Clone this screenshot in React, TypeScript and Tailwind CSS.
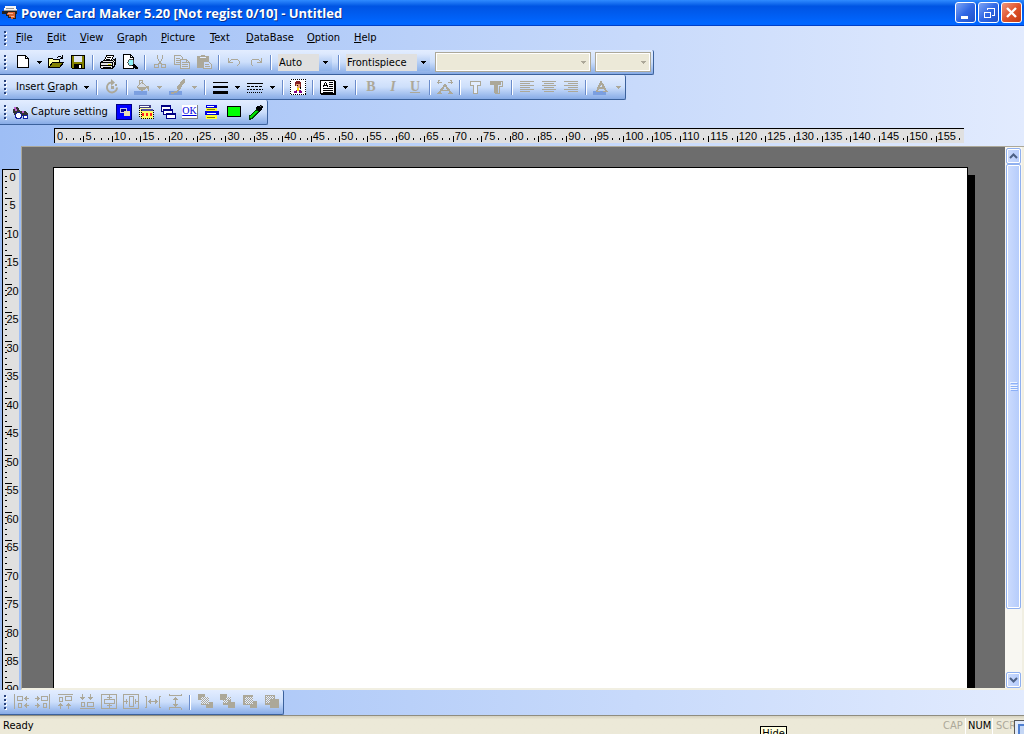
import type { ReactNode } from "react";
import clsx from "clsx";

const menus = [
  { label: "_File", width: "w-[31px]" },
  { label: "_Edit", width: "w-[33px]" },
  { label: "_View", width: "w-[37px]" },
  { label: "_Graph", width: "w-[44px]" },
  { label: "_Picture", width: "w-[49px]" },
  { label: "_Text", width: "w-[36px]" },
  { label: "_DataBase", width: "w-[61px]" },
  { label: "_Option", width: "w-[47px]" },
  { label: "_Help", width: "w-[36px]" },
];

const marks = (count: number) => Array.from({ length: count }, (_, i) => i * 5);

// "_File" -> F underlined
function Mnemonic({ text }: { text: string }) {
  const at = text.indexOf("_");
  if (at < 0) return <>{text}</>;
  return (
    <span className="whitespace-pre">
      {text.slice(0, at)}
      <u className="underline-offset-1">{text[at + 1]}</u>
      {text.slice(at + 2)}
    </span>
  );
}

function Icon({ children, size = 16 }: { children: ReactNode; size?: number }) {
  return (
    <svg width={size} height={size} viewBox={`0 0 ${size} ${size}`} fill="none" stroke="currentColor" shapeRendering="crispEdges">
      {children}
    </svg>
  );
}

function Grip() {
  return (
    <div className="w-[12px] shrink-0 flex flex-col gap-[2px] pl-[4px]">
      {[0, 1, 2, 3].map((i) => (
        <i key={i} className="w-[2px] h-[2px] bg-[#27417b] shadow-[1px_1px_0_#fff]" />
      ))}
    </div>
  );
}

function Sep() {
  return (
    <div className="w-[8px] shrink-0 flex justify-center">
      <div className="w-[2px] h-[15px] bg-[#6a8ccb] border-r border-white" />
    </div>
  );
}

function Tool({ name, off, children }: { name: string; off?: boolean; children: ReactNode }) {
  return (
    <button
      aria-label={name}
      disabled={off}
      className={clsx("w-[22px] h-[22px] shrink-0 flex items-center justify-center", off ? "text-[#aca899]" : "text-black")}
    >
      {children}
    </button>
  );
}

function Triangle() {
  return (
    <svg width="5" height="3" viewBox="0 0 5 3" fill="currentColor" shapeRendering="crispEdges">
      <path d="M0 0h5v1H4v1H3v1H2V2H1V1H0z" />
    </svg>
  );
}

function Arrow({ name, off, width = "w-[13px]" }: { name: string; off?: boolean; width?: string }) {
  return (
    <button
      aria-label={name}
      disabled={off}
      className={clsx("h-[22px] shrink-0 flex items-center justify-center", width, off ? "text-[#aca899]" : "text-black")}
    >
      <Triangle />
    </button>
  );
}

function Bar({ children }: { children: ReactNode }) {
  return (
    <div className="h-[25px] w-fit flex items-center rounded-r-[2px] bg-linear-to-b from-[#e3edff] via-[#cddffb] to-[#87abe6] border-b border-r border-[#3b619c]">
      <Grip />
      {children}
    </div>
  );
}

function Combo({ label, value, width }: { label: string; value: string; width: string }) {
  return (
    <div className={clsx("h-[17px] mx-[3px] shrink-0 flex bg-[#e0e0e0] relative", width)}>
      <select aria-label={label} defaultValue={value} className="w-full appearance-none bg-transparent pl-[1px] pr-[13px] leading-[17px] outline-none">
        <option>{value}</option>
      </select>
      <span className="absolute right-0 inset-y-0 w-[13px] flex items-center justify-center bg-linear-to-b from-[#dce8fd] to-[#8db2ea] pointer-events-none">
        <Triangle />
      </span>
    </div>
  );
}

function EmptyCombo({ label, width }: { label: string; width: string }) {
  return (
    <div className={clsx("h-[20px] shrink-0 relative border border-[#aca899] bg-white p-[1px]", width)}>
      <select aria-label={label} disabled className="block w-full h-full appearance-none bg-[#ece9d8]" />
      <span className="absolute right-[4px] inset-y-0 flex items-center text-[#aca899] pointer-events-none">
        <Triangle />
      </span>
    </div>
  );
}

function TitleBar() {
  const base = "w-[21px] h-[21px] rounded-[3px] border border-white flex items-center justify-center text-white";
  return (
    <header className="h-[26px] flex items-center pl-[2px] pr-[2px] bg-linear-to-b from-[#2f8bff] from-0% via-[#0054e3] via-25% to-[#0066ff] to-90% border-b border-[#0040c8]">
      <svg width="16" height="16" viewBox="0 0 16 16" shapeRendering="crispEdges">
        <path d="M3 1h11l1 5H2z" fill="#f4f4f4" />
        <path d="M4 3h8v1H4zM2 5h13v1H2z" fill="#9a9a9a" />
        <path d="M0 6h15v3h-1v5h-4v-1H6v-2H4V9H0z" fill="#222" />
        <path d="M6 7h7v6h-2v1H9v-2H7v-2H5V8h1z" fill="#d9622f" />
        <path d="M6 8h5v1H6zM9 11h3v1H9z" fill="#f8b48a" />
      </svg>
      <h1 className="flex-1 pl-[3px] font-['Open_Sans','Liberation_Sans',sans-serif] text-[13px] font-bold text-white whitespace-nowrap [text-shadow:1px_1px_0_#0a318e]">
        Power Card Maker 5.20 [Not regist 0/10] - Untitled
      </h1>
      <div className="flex gap-[2px]">
        <button aria-label="Minimize" className={clsx(base, "bg-linear-to-br from-[#7ea4f4] via-[#3168e5] to-[#2050c8]")}>
          <Icon><path d="M3 11h7v3H3z" fill="currentColor" stroke="none" /></Icon>
        </button>
        <button aria-label="Restore" className={clsx(base, "bg-linear-to-br from-[#7ea4f4] via-[#3168e5] to-[#2050c8]")}>
          <Icon><path d="M6 5V3.5h7.5V10H11M6 3h8M3.5 7.5h6v5h-6zM3 7h7" /></Icon>
        </button>
        <button aria-label="Close" className={clsx(base, "bg-linear-to-br from-[#f0957a] via-[#e0542c] to-[#c33b13]")}>
          <svg width="15" height="15" viewBox="0 0 15 15" stroke="currentColor" strokeWidth="2.4"><path d="M3 3l9 9M12 3l-9 9" /></svg>
        </button>
      </div>
    </header>
  );
}

function StandardBar() {
  return (
    <Bar>
      <Tool name="New">
        <Icon><path d="M2.500 1.500h8l3 3v9h-11z" fill="#fff" /><path d="M10.500 1.500v3h3" /></Icon>
      </Tool>
      <Arrow name="New options" width="w-[11px]" />
      <Tool name="Open">
        <Icon>
          <path d="M.5 13.500V4.500h4l1 1h6v3H4.500L1 13.500" fill="#ffff9c" />
          <path d="M1 13.500L4.500 8.500H15.500L11.500 13.500z" fill="#848200" />
          <path d="M9 3.500h1M10 2.500h3M13 3.500h2M14.500 1v4M12 4.500h3" />
        </Icon>
      </Tool>
      <Tool name="Save">
        <Icon>
          <path d="M1.500 1.500h13v13h-12l-1-1z" fill="#848200" />
          <path d="M4 2h8v6H4z" fill="#dfe6f5" stroke="none" />
          <path d="M4 10h8v4H4z" fill="#000" stroke="none" />
          <path d="M9 11h2v3H9z" fill="#fff" stroke="none" />
        </Icon>
      </Tool>
      <Sep />
      <Tool name="Print">
        <Icon>
          <path d="M4.500 6.500l2-5h7l-2 5z" fill="#fff" />
          <path d="M7 3.500h4M6 5.500h4" />
          <path d="M.5 8.500l3-2h9l3-2v6l-3 4h-11l-1-1z" fill="#e4e4e4" />
          <path d="M1 8.500h11.500v5M1 11.500h11M3 13.500h8M12.500 8.500l3-3M14 8v4" />
          <path d="M8 10h3v1H8z" fill="#d8d800" stroke="none" />
        </Icon>
      </Tool>
      <Tool name="Print preview">
        <Icon>
          <path d="M1.500.5h7l3 3v11h-10z" fill="#fff" />
          <path d="M8.500.5v3h3" />
          <circle cx="9" cy="8.500" r="3" fill="#8ff3f8" stroke="#555" />
          <path d="M11 11l4 4M12 11l4 4" strokeWidth="1.500" />
        </Icon>
      </Tool>
      <Sep />
      <Tool name="Cut" off>
        <Icon><path d="M5.500 1v3l2 4 3 3M10.500 1v3l-2 4-3 3" /><circle cx="4.500" cy="12" r="2" /><circle cx="11.500" cy="12" r="2" /></Icon>
      </Tool>
      <Tool name="Copy" off>
        <Icon>
          <path d="M.5 1.500h6l2 2v7h-8zM2 4.500h4M2 6.500h4M2 8.500h4" />
          <path d="M6.500 5.500h6l3 3v6h-9z" fill="#c8dafa" />
          <path d="M8 8.500h4M8 10.500h6M8 12.500h6M12.500 5.500v3h3" />
        </Icon>
      </Tool>
      <Tool name="Paste" off>
        <Icon>
          <path d="M1 2h12v12H1zM5 1h4v1H5z" fill="currentColor" stroke="none" />
          <path d="M4 3.500h6" stroke="#e3edff" />
          <path d="M7.500 7.500h5l3 3v4h-8z" fill="#c8dafa" />
          <path d="M9 10.500h4M9 12.500h5" />
        </Icon>
      </Tool>
      <Sep />
      <Tool name="Undo" off><Icon><path d="M2.500 4v5M2 8.500h5M3 8l3-3h5l2 2v3l-2 2" /></Icon></Tool>
      <Tool name="Redo" off><Icon><path d="M13.500 4v5M14 8.500H9M13 8l-3-3H5L3 7v3l2 2" /></Icon></Tool>
      <Sep />
      <Combo label="Zoom" value="Auto" width="w-[54px]" />
      <Sep />
      <Combo label="Page" value="Frontispiece" width="w-[84px]" />
      <div className="flex gap-[4px] pl-[2px] pr-[2px]">
        <EmptyCombo label="Font" width="w-[156px]" />
        <EmptyCombo label="Font size" width="w-[56px]" />
      </div>
    </Bar>
  );
}

function AlignIcon({ d }: { d: string }) {
  return <Icon><path d={d} /></Icon>;
}

function FormatBar() {
  return (
    <Bar>
      <button className="w-[68px] h-[22px] pl-[4px] text-left whitespace-nowrap"><Mnemonic text="Insert _Graph" /></button>
      <Arrow name="Insert graph options" />
      <Sep />
      <Tool name="Rotate" off>
        <svg width="16" height="16" viewBox="0 0 16 16" fill="none" stroke="currentColor">
          <path d="M7 3.500a5 5 0 1 0 6 5" strokeWidth="2" />
          <path d="M7 0l4 3.500L7 7z" fill="currentColor" stroke="none" />
          <path d="M7 7h3v3H7zM11 5h2v2h-2z" fill="currentColor" stroke="none" />
        </svg>
      </Tool>
      <Sep />
      <Tool name="Fill" off>
        <Icon><path d="M0 12h13v4H0z" fill="#7b9fe0" stroke="none" /><path d="M3 8l5-5 5 5-5 4z" fill="#d5ddea" /><path d="M4 8h8l-4 4z" fill="currentColor" /><path d="M5.500 6V1.500h3V5M14 7v5M13 7v3" /></Icon>
      </Tool>
      <Arrow name="Fill colour" off />
      <Tool name="Brush" off>
        <Icon><path d="M0 12h13v4H0z" fill="#7b9fe0" stroke="none" /><path d="M14 0h2v3l-5 7H8V8z" fill="currentColor" stroke="none" /><path d="M8.500 8.500l3 2M2 13.500h3l3-1 2-2" strokeWidth="2" /></Icon>
      </Tool>
      <Arrow name="Brush colour" off />
      <Sep />
      <Tool name="Line width"><Icon><path d="M1 3h15v1H1zM1 7h15v2H1zM1 12h15v3H1z" fill="currentColor" stroke="none" /></Icon></Tool>
      <Arrow name="Line width options" />
      <Tool name="Line style">
        <Icon><path d="M0 4.500h16" /><path d="M0 7.500h16" strokeDasharray="3 1" /><path d="M0 10.500h16" strokeDasharray="2 1" /><path d="M0 13.500h16" strokeDasharray="1 1" /></Icon>
      </Tool>
      <Arrow name="Line style options" />
      <Sep />
      <Tool name="Picture">
        <Icon>
          <path d="M0 0h16v16H0z" fill="#fff" stroke="none" /><path d="M.5.5h15v15H.5z" strokeDasharray="1 1" />
          <path d="M6 2h4v1h1v5h-1V5H6v2H5V3h1z" fill="#842020" stroke="none" /><path d="M6 5h4v4H7V7H6z" fill="#e8a070" stroke="none" />
          <path d="M4 12h2v-1h1v3h2v-3h2v1h1v2H4z" fill="#800080" stroke="none" /><path d="M7 9h2v3H7z" fill="#ffe000" stroke="none" /><path d="M7 6.500h1M10.500 8v2" />
        </Icon>
      </Tool>
      <Sep />
      <Tool name="Text box">
        <Icon><path d="M.5 1.500h14v13H.5z" fill="#fff" strokeWidth="1" /><path d="M15.500 2v14M1 15.500h14" /><path d="M3 7.500l2.500-4L8 7.500M4 6.500h3M9 3.500h4M9 5.500h4M9 7.500h4M3 9.500h10M3 11.500h10M3 13h10" /></Icon>
      </Tool>
      <Arrow name="Text box options" />
      <Sep />
      <button disabled aria-label="Bold" className="w-[22px] text-[#aca899] font-['Liberation_Serif',serif] text-[14px] font-bold">B</button>
      <button disabled aria-label="Italic" className="w-[22px] text-[#aca899] font-['Liberation_Serif',serif] text-[14px] font-bold italic">I</button>
      <button disabled aria-label="Underline" className="w-[22px] text-[#aca899] font-['Liberation_Serif',serif] text-[14px] font-bold underline">U</button>
      <Sep />
      <Tool name="Text spacing" off>
        <Icon><path d="M0 3.500h5M2.500 1L.5 3.500l2 2M11 3.500h5M13.500 1l2 2.500-2 2M0 14.500h5M11 14.500h5M5 11.500h6" /><path d="M2 14l6-8 6 8" strokeWidth="2" /></Icon>
      </Tool>
      <Sep />
      <Tool name="Outline text" off><Icon><path d="M3.500 2.500h10v4h-3v8h-4v-8h-3z" fill="#e3edff" /></Icon></Tool>
      <Tool name="Shadow text" off>
        <Icon><path d="M1 2h11v4H9v8H5V6H1z" fill="currentColor" stroke="none" /><path d="M12 2.500h1.500v5h-3v7H6" /></Icon>
      </Tool>
      <Sep />
      <Tool name="Align left" off><AlignIcon d="M1 2.500h14M1 4.500h10M1 6.500h14M1 8.500h10M1 10.500h14M1 12.500h10" /></Tool>
      <Tool name="Centre" off><AlignIcon d="M1 2.500h14M3 4.500h10M1 6.500h14M3 8.500h10M1 10.500h14M3 12.500h10" /></Tool>
      <Tool name="Align right" off><AlignIcon d="M1 2.500h14M5 4.500h10M1 6.500h14M5 8.500h10M1 10.500h14M5 12.500h10" /></Tool>
      <Sep />
      <Tool name="Text colour" off>
        <Icon><path d="M0 12h13v4H0z" fill="#7b9fe0" stroke="none" /><path d="M4 12l4-9 5 9M6 8.500h4" strokeWidth="2" /><path d="M3 12.500h4M10 12.500h5" /></Icon>
      </Tool>
      <Arrow name="Text colour options" off />
    </Bar>
  );
}

function CaptureBar() {
  return (
    <Bar>
      <button className="w-[101px] h-[22px] flex items-center gap-[2px] whitespace-nowrap">
        <Icon size={17}>
          <path d="M2 3h4l3 5v5H4L1 8z" fill="#333" stroke="none" /><path d="M9 7h4l3 3v4h-4l-3-3z" fill="#333" stroke="none" />
          <path d="M2 4h2M3 6h2M10 8h2" stroke="#c060d0" strokeWidth="2" />
          <circle cx="6.500" cy="11.500" r="3" fill="#fff" stroke="#1020a0" /><circle cx="13.500" cy="13" r="2" fill="#fff" stroke="#1020a0" />
        </Icon>
        Capture setting
      </button>
      <Tool name="Capture screen">
        <Icon><path d="M0 0h16v16H0z" fill="#0000ff" stroke="#000084" strokeWidth="2" /><path d="M4.500 4.500h6v4h-6z" stroke="#c8c8e8" fill="#000084" /><path d="M8 7h6v5H8z" fill="#e8e0b0" stroke="none" /></Icon>
      </Tool>
      <Tool name="Capture window">
        <Icon>
          <path d="M1 1h12v12H1z" fill="#ffffa0" stroke="none" /><path d="M1 1h12v3H1z" fill="#404084" stroke="none" /><path d="M2 2.500h9" stroke="#fff" />
          <path d="M3 5h12v10H3z" fill="#ffff60" stroke="none" /><path d="M3 5h12v2H3z" fill="#5050a0" stroke="none" />
          <path d="M4 10.500h11" stroke="#ff2020" strokeWidth="3" strokeDasharray="2 2" /><path d="M3 14.500h12M1.500 4v9M15.500 6v9M3.500 6v9" strokeDasharray="1 1" />
        </Icon>
      </Tool>
      <Tool name="Capture cascade">
        <Icon>
          <path d="M1.500 1.500h9v6h-9z" fill="#fff" stroke="#000084" /><path d="M1 2.500h10" stroke="#000084" />
          <path d="M3.500 5.500h9v5h-9z" fill="#fff" stroke="#000084" /><path d="M3 6.500h10" stroke="#000084" />
          <path d="M6.500 9.500h9v5h-9z" fill="#fff" stroke="#000084" /><path d="M6 10.500h10" stroke="#000084" />
        </Icon>
      </Tool>
      <Tool name="Capture control">
        <span className="w-[16px] h-[14px] bg-white border-r border-b border-[#808080] font-['Liberation_Serif',serif] text-[10px] leading-[12px] text-[#0000e0] underline">
          OK
        </span>
      </Tool>
      <Tool name="Capture menu">
        <Icon>
          <path d="M2 1h11v3H2z" fill="#0000e0" stroke="none" /><path d="M3 2.500h7" stroke="#fff" /><path d="M2 4h11v11H2z" fill="#ffff30" stroke="none" />
          <path d="M1 7h14v4H1z" fill="#0000e0" stroke="none" /><path d="M3 5.500h8M3 13.500h8" stroke="#808000" /><path d="M3 9h9" stroke="#fff" />
        </Icon>
      </Tool>
      <Tool name="Capture area"><Icon><path d="M1.500 2.500h13v10h-13z" fill="#00ff00" /></Icon></Tool>
      <Tool name="Pick colour">
        <Icon><path d="M1 15.500v-3l8-7 2 2-7 7z" fill="#00e000" stroke="#004000" /><path d="M9 3l4 4M11 5l3-3" strokeWidth="3" /><path d="M12 3l2-2" stroke="#777" /></Icon>
      </Tool>
    </Bar>
  );
}

const arrangeIcons = [
  { name: "Align left edges", d: "M1.500 0v15M4.500 2.500h5v4h-5zM11 4.500h5M13.500 2v5M12.500 3v3M12.500 10v3M11 11.500h5M13.500 9v5M5.500 9.500h3v4h-3z" },
  { name: "Align right edges", d: "M14.500 0v15M6.500 2.500h6v4h-6zM0 4.500h5M2.500 2v5M3.500 3v3M3.500 10v3M0 11.500h5M2.500 9v5M8.500 9.500h3v4h-3z" },
  { name: "Align tops", d: "M1 .5h15M2.500 3.500h3v4h-3zM8.500 2.500h6v4h-6zM3.500 9v6M1 11.500h5M2 10.500h3M11.500 9v6M9 11.500h5M10 10.500h3" },
  { name: "Align bottoms", d: "M1 14.500h15M2.500 8.500h3v4h-3zM8.500 8.500h6v4h-6zM3.500 0v6M1 3.500h5M2 4.500h3M11.500 0v6M9 3.500h5M10 4.500h3" },
  { name: "Centre vertically", d: "M.5.500h15v14H.5zM3.500 5.500h10v4h-10zM8.500 1v4M6 3.500h5M8.500 10v4M6 11.500h5" },
  { name: "Centre horizontally", d: "M.5.500h15v14H.5zM6.500 2.500h4v10h-4zM1 7.500h4M3.500 5v5M12 7.500h4M12.500 5v5" },
  { name: "Space across", d: "M1.500 2v12M14.500 2v12M0 2.500h2M14 2.500h2M0 13.500h2M14 13.500h2M3 7.500h10M5.500 5v5M4.500 6v3M10.500 5v5M11.500 6v3" },
  { name: "Space down", d: "M2 0v2M14 0v2M2 1.500h12M2 14v1.500M14 14v1.500M2 13.500h12M8.500 3v10M6 5.500h5M7 4.500h3M6 10.500h5M7 11.500h3" },
];

function ArrangeBar() {
  const dither = (
    <path d="M5 3.500h7M4 4.500h8M5 5.500h7M4 6.500h8M5 7.500h7M4 8.500h8M5 9.500h7" stroke="#e3edff" strokeDasharray="1 1" />
  );
  return (
    <Bar>
      <div className="-ml-[2px] flex">
        {arrangeIcons.map((icon) => (
          <Tool key={icon.name} name={icon.name} off><Icon><path d={icon.d} /></Icon></Tool>
        ))}
      </div>
      <Sep />
      <Tool name="Bring forward" off>
        <Icon><path d="M1 0h7v6H1zM4 3h8v8H4zM9 8h7v6H9z" fill="currentColor" stroke="none" />{dither}</Icon>
      </Tool>
      <Tool name="Send backward" off>
        <Icon><path d="M1 0h7v6H1zM4 3h8v8H4zM9 8h7v6H9z" fill="currentColor" stroke="none" /><path d="M8 3.500h4M7 4.500h5M8 5.500h4M5 6.500h4M4 7.500h5M5 8.500h4" stroke="#e3edff" strokeDasharray="1 1" /></Icon>
      </Tool>
      <Tool name="Bring to front" off>
        <Icon><path d="M2 1h10v10H2zM9 7h7v7H9z" fill="currentColor" stroke="none" />{dither}</Icon>
      </Tool>
      <Tool name="Send to back" off>
        <Icon><path d="M2 1h10v10H2zM7 5h9v9H7z" fill="currentColor" stroke="none" /><path d="M3 2.500h8M4 3.500h8M3 4.500h8M4 5.500h3M3 6.500h3M4 7.500h3M3 8.500h3" stroke="#e3edff" strokeDasharray="1 1" /></Icon>
      </Tool>
      <div className="w-[1px]" />
    </Bar>
  );
}

function TopRuler() {
  return (
    <div className="h-[15px] ml-[54px] mr-[60px] flex bg-[#e0e0e0] border-t border-l border-black font-['Liberation_Sans',sans-serif] text-[11px] leading-[14px]">
      {marks(32).map((n) => (
        <div key={n} className="flex-1 basis-0 min-w-0 flex items-end">
          <i className={clsx("w-[1px] h-[6px] mb-[1px]", n > 0 && "bg-black")} />
          <span className="pl-[1px]">{n}</span>
          <span className="flex-1 flex justify-around mb-[3px]">
            {Array.from({ length: n > 95 ? 1 : n > 5 ? 2 : 3 }, (_, i) => (
              <i key={i} className="w-[1px] h-[2px] bg-black" />
            ))}
          </span>
        </div>
      ))}
    </div>
  );
}

function SideRuler() {
  return (
    <div className="w-[17px] ml-[2px] mt-[23px] mr-[2px] shrink-0 border-t border-l border-black bg-[#e0e0e0] overflow-hidden font-['Liberation_Sans',sans-serif] text-[11px] leading-[14px]">
      <div className="h-[541px] flex flex-col">
        {marks(19).map((n) => (
          <div key={n} className="flex-1 basis-0 min-h-0 flex pl-[2px]">
            <div className="w-[1px] flex flex-col">
              <i className={clsx("flex-1 w-[7px] border-t", n > 0 ? "border-black" : "border-transparent")} />
              {[1, 2, 3, 4].map((i) => (
                <i key={i} className="flex-1 w-[2px] border-t border-black" />
              ))}
            </div>
            <span className="flex-1 text-center">{n}</span>
          </div>
        ))}
      </div>
    </div>
  );
}

function ScrollBar() {
  const box = "mx-[1px] w-[15px] rounded-[2px] border border-[#8fb0f0] shadow-[inset_0_0_0_1px_#fff] bg-linear-to-r from-[#cddcfe] to-[#b4cbfb] flex items-center justify-center";
  return (
    <div className="w-[17px] shrink-0 pt-[1px] flex flex-col bg-[#f8f7f2]">
      <button aria-label="Scroll up" className={clsx(box, "h-[16px]")}>
        <svg width="9" height="6" viewBox="0 0 9 6" fill="none" stroke="#4d6185" strokeWidth="2"><path d="M1 5l3.500-3.500L8 5" /></svg>
      </button>
      <div className="flex-1 flex flex-col">
        <div className={clsx(box, "flex-[7]")}>
          <div className="w-[7px] h-[8px] flex flex-col justify-between">
            {[0, 1, 2, 3].map((i) => (
              <i key={i} className="h-[1px] bg-[#eef4fe] shadow-[1px_1px_0_#8cb0f8]" />
            ))}
          </div>
        </div>
        <div className="flex-1" />
      </div>
      <button aria-label="Scroll down" className={clsx(box, "h-[16px]")}>
        <svg width="9" height="6" viewBox="0 0 9 6" fill="none" stroke="#4d6185" strokeWidth="2"><path d="M1 1l3.500 3.500L8 1" /></svg>
      </button>
    </div>
  );
}

function StatusBar() {
  return (
    <footer className="h-[19px] shrink-0 flex items-end border-t border-[#8f8d80] bg-linear-to-b from-[#d6d2c0] via-[#ece9d8] via-20% to-[#ece9d8] relative leading-[16px]">
      <span className="flex-1 pl-[3px]">Ready</span>
      <span className="w-[22px] text-[#aca899]">CAP</span>
      <span className="w-[28px] pl-[2px] border-x border-white">NUM</span>
      <span className="w-[31px] pl-[3px] text-[#aca899]">SCRL</span>
      <div className="absolute right-0 bottom-0 w-[10px] h-[14px] border-t border-l border-[#555] bg-[#dfe9fb] pt-[3px] pl-[3px]">
        <div className="w-full h-full border-t-2 border-l-2 border-[#4f7fd0] bg-[#c4d6f4]" />
      </div>
      <div role="tooltip" className="absolute left-[760px] bottom-0 h-[8px] w-[27px] border border-b-0 border-black bg-[#ffffe1] text-center overflow-hidden leading-[14px]">
        Hide
      </div>
    </footer>
  );
}

export default function App() {
  return (
    <div className="h-screen flex flex-col overflow-hidden bg-linear-to-r from-[#9ebef5] to-[#e2ebfe] font-['DejaVu_Sans_Condensed','Liberation_Sans',sans-serif] text-[11px] leading-[14px] text-black cursor-default">
      <TitleBar />
      <nav className="h-[23px] mb-[1px] flex items-center">
        <Grip />
        <div className="flex">
          {menus.map((m) => (
            <button key={m.label} className={clsx("h-[20px] pl-[4px] text-left", m.width)}>
              <Mnemonic text={m.label} />
            </button>
          ))}
        </div>
      </nav>
      <StandardBar />
      <FormatBar />
      <CaptureBar />
      <div className="pt-[3px] pb-[3px]">
        <TopRuler />
      </div>
      <main className="flex-1 min-h-0 flex">
        <SideRuler />
        <div className="flex-1 flex border-t border-l border-[#aca899] border-b-2 border-b-[#f1efe2]">
          <div className="flex-1 flex bg-[#6d6d6d] pt-[20px] pl-[31px] pr-[30px] overflow-hidden">
            <div className="flex-1 bg-white border-t border-x border-black" />
            <div className="w-[7px] mt-[8px] bg-black" />
          </div>
          <ScrollBar />
          <div className="w-[2px] bg-[#f1efe2]" />
        </div>
      </main>
      <ArrangeBar />
      <StatusBar />
    </div>
  );
}
